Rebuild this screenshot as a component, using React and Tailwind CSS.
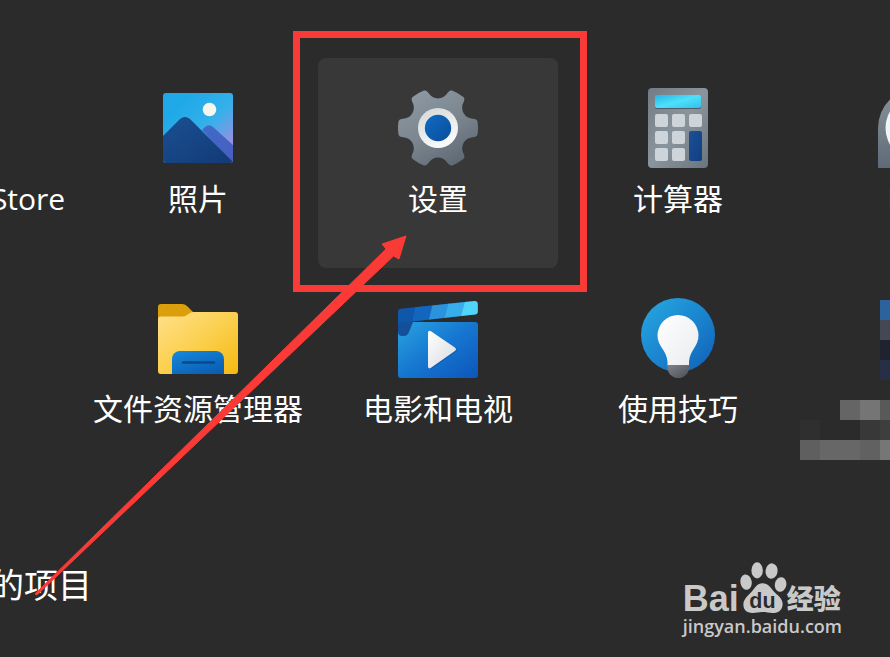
import { useId } from 'react';

function Icon({ children }) {
  return (
    <svg viewBox="0 0 80 80" className="size-20 shrink-0" aria-hidden="true">
      {children}
    </svg>
  );
}

function Gradient({ id, stops, x1 = 0, y1 = 0, x2 = 1, y2 = 1 }) {
  return (
    <linearGradient id={id} x1={x1} y1={y1} x2={x2} y2={y2}>
      {stops.map((color, i) => (
        <stop key={color} offset={i / (stops.length - 1)} stopColor={color} />
      ))}
    </linearGradient>
  );
}

function StoreIcon() {
  return (
    <Icon>
      <path d="M5 20h70v48a6 6 0 0 1-6 6H11a6 6 0 0 1-6-6z" fill="#1a86d8" />
      <path d="M26 20v-6a5 5 0 0 1 5-5h18a5 5 0 0 1 5 5v6" fill="none" stroke="#4cc2f5" strokeWidth="5" />
    </Icon>
  );
}

function PhotosIcon() {
  return (
    <Icon>
      <defs>
        <Gradient id="photo-sky" stops={['#1fa9e8', '#35b0ea', '#a88be0']} x1={0.3} y1={0.1} x2={1} y2={0.8} />
        <Gradient id="photo-front" stops={['#1b4f92', '#123a76']} />
        <Gradient id="photo-back" stops={['#3f6cc8', '#4a5cc0']} />
        <clipPath id="photo-clip">
          <rect x="5" y="5" width="70" height="70" rx="3" />
        </clipPath>
      </defs>
      <g clipPath="url(#photo-clip)">
        <rect x="5" y="5" width="70" height="70" fill="url(#photo-sky)" />
        <path d="M44 42l3-3q4-3.500 8 0l20 18v19z" fill="url(#photo-back)" />
        <path d="M5 48l17-17q5-4 10 0l43 43v2H5z" fill="url(#photo-front)" />
        <circle cx="51.500" cy="21.500" r="6.800" fill="#f7f5ee" />
      </g>
    </Icon>
  );
}

// one tooth and the scallop after it, turned six times round the centre
function gearPath() {
  const point = (x, y, turn) => {
    const a = (turn * Math.PI) / 3;
    const px = 40 + x * Math.cos(a) - y * Math.sin(a);
    const py = 40 + x * Math.sin(a) + y * Math.cos(a);
    return `${px.toFixed(2)} ${py.toFixed(2)}`;
  };
  let d = `M${point(36.5, -9, 0)}`;
  for (let i = 0; i < 6; i += 1) {
    d += `Q${point(39, -8.6, i)} ${point(39.5, -6.5, i)}`;
    d += `Q${point(40.5, 0, i)} ${point(39.5, 6.5, i)}`;
    d += `Q${point(39, 8.6, i)} ${point(36.5, 9, i)}`;
    d += `L${point(35, 9.3, i)}`;
    d += `A11 11 0 0 0 ${point(35, -9.3, i + 1)}`;
    d += `L${point(36.5, -9, i + 1)}`;
  }
  return `${d}Z`;
}

function SettingsIcon() {
  return (
    <Icon>
      <defs>
        <Gradient id="gear" stops={['#8d99a3', '#7b868f', '#5c6772']} x1={0.2} y1={0} x2={0.8} y2={1} />
        <Gradient id="gear-ring" stops={['#d3d5d6', '#fafafa']} x2={0.5} />
        <Gradient id="gear-dot" stops={['#0f6cc2', '#0a4c9c']} />
      </defs>
      <path d={gearPath()} fill="url(#gear)" />
      <circle cx="40" cy="40" r="20" fill="url(#gear-ring)" />
      <circle cx="40" cy="40" r="13.200" fill="url(#gear-dot)" />
    </Icon>
  );
}

const calcKeys = [
  [17, 26], [34, 26], [51, 26],
  [17, 43], [34, 43],
  [17, 60], [34, 60],
];

function CalculatorIcon() {
  return (
    <Icon>
      <defs>
        <Gradient id="calc-body" stops={['#727c84', '#8a949c', '#6a747d']} />
        <Gradient id="calc-screen" stops={['#28b4e6', '#4de0fb', '#35bfe9']} />
        <Gradient id="calc-key" stops={['#1b4f98', '#123f80']} />
      </defs>
      <rect x="10" width="60" height="80" rx="4" fill="url(#calc-body)" />
      <rect x="17" y="8" width="46" height="13" rx="2" fill="#4f5b66" />
      <rect x="17" y="7" width="46" height="13" rx="2" fill="url(#calc-screen)" />
      {calcKeys.map(([x, y]) => (
        <rect key={`${x}-${y}`} x={x} y={y} width="13" height="13" rx="2" fill="#cdd4da" />
      ))}
      <rect x="51" y="43" width="13" height="30" rx="2" fill="url(#calc-key)" />
    </Icon>
  );
}

function ClockIcon() {
  return (
    <Icon>
      <defs>
        <Gradient id="clock-body" stops={['#8a949c', '#5e6b77']} x2={0} />
      </defs>
      <path d="M0 80V40a40 40 0 0 1 80 0v40z" fill="url(#clock-body)" />
      <circle cx="40" cy="40" r="32.500" fill="#eef5f9" />
      <path d="M40 20v21l13 8" fill="none" stroke="#2a3b4c" strokeWidth="4" />
    </Icon>
  );
}

function FolderIcon() {
  return (
    <Icon>
      <defs>
        <Gradient id="folder-front" stops={['#ffe08a', '#fbd04f', '#f5b90f']} />
        <Gradient id="folder-tray" stops={['#1789dc', '#0a5fb4']} x2={0.7} />
      </defs>
      <path d="M0 9a3 3 0 0 1 3-3h21q3 0 5 2l7 7-6 15H0z" fill="#dc9f0c" />
      <path
        d="M0 21q0-2.500 3-2.500h21q3 0 5-1.500l3-2q1.500-1 4-1h41a3 3 0 0 1 3 3v56a3 3 0 0 1-3 3H3a3 3 0 0 1-3-3z"
        fill="url(#folder-front)"
      />
      <path d="M14 76V61a8 8 0 0 1 8-8h36a8 8 0 0 1 8 8v15z" fill="url(#folder-tray)" />
      <path d="M25 64.500h31" stroke="#0a4a8c" strokeWidth="2.500" strokeLinecap="round" />
    </Icon>
  );
}

function MoviesIcon() {
  return (
    <Icon>
      <defs>
        <Gradient id="movie-body" stops={['#2aa4e0', '#1677d0', '#0d55bb']} />
        <Gradient id="movie-play" stops={['#ffffff', '#d6d9dd']} />
        <clipPath id="movie-bar">
          <path d="M0 14q0-3 3-3.300L76.500 3q3-.3 3.300 2.500v8q0 2.700-2.600 3L0 25z" />
        </clipPath>
      </defs>
      <path d="M0 22l16 2h61a3 3 0 0 1 3 3v50a3 3 0 0 1-3 3H3a3 3 0 0 1-3-3z" fill="url(#movie-body)" />
      <path d="M0 14h19l-8 20q-1.500 4-5 4H4q-4 0-4-5z" fill="#144f9a" />
      <g clipPath="url(#movie-bar)">
        <path d="M0 0h80v30H0z" fill="#0f57aa" />
        <path d="M19 0h17l-6 30H13z" fill="#1266bd" />
        <path d="M36 0h17l-8 30H29z" fill="#2a93dc" />
        <path d="M52 0h17l-7 30H44z" fill="#37aeea" />
        <path d="M68 0h14v30H60z" fill="#50d4fa" />
      </g>
      <path d="M31 36q0-3.500 3-1.800l23.500 16q3 2 0 4L34 70.800q-3 1.700-3-1.500z" fill="#0b4596" opacity=".35" />
      <path d="M30 35q0-3.500 3-1.800l23.500 16q3 2 0 4L33 69.800q-3 1.700-3-1.500z" fill="url(#movie-play)" />
    </Icon>
  );
}

function TipsIcon() {
  return (
    <Icon>
      <defs>
        <Gradient id="tips-disc" stops={['#27a9e0', '#1b86d0', '#0f5fb5']} />
        <Gradient id="tips-bulb" stops={['#ffffff', '#e9ebee']} />
        <Gradient id="tips-base" stops={['#7d838a', '#4a4f55']} />
      </defs>
      <circle cx="40" cy="37" r="37" fill="url(#tips-disc)" />
      <path
        d="M40 17a20.500 20.500 0 0 1 20.500 20.500c0 11-8.500 14-9.500 26v4H29.500v-4c-1-12-10-15-10-26A20.500 20.500 0 0 1 40 17z"
        fill="url(#tips-bulb)"
      />
      <path d="M29.500 67H51v2.500a10.700 10.700 0 0 1-21.500 0z" fill="url(#tips-base)" />
    </Icon>
  );
}

// x, y, width, colour of the pixelated blocks
const mosaic = [
  [82, 32, 20, '#2c639c'],
  [82, 52, 20, '#444855'],
  [82, 72, 20, '#1e232f'],
  [82, 92, 20, '#262f45'],
  [42, 132, 20, '#656565'],
  [62, 132, 20, '#757575'],
  [82, 132, 20, '#595959'],
  [2, 152, 20, '#2f2f2f'],
  [62, 152, 20, '#383838'],
  [82, 152, 20, '#3e3e3e'],
  [2, 172, 20, '#5f5f5f'],
  [22, 172, 40, '#676767'],
  [62, 172, 20, '#616161'],
  [82, 172, 20, '#767676'],
];

function MosaicTile() {
  return (
    <svg viewBox="0 0 240 210" className="h-[210px] w-60" aria-hidden="true">
      {mosaic.map(([x, y, width, fill]) => (
        <rect key={`${x}-${y}`} x={x} y={y} width={width} height="20" fill={fill} />
      ))}
    </svg>
  );
}

function AppTile({ icon: TileIcon, label, active }) {
  const id = useId();
  return (
    <div className="relative">
      <button
        type="button"
        aria-labelledby={id}
        className={
          active
            ? 'flex h-[210px] w-full flex-col items-center gap-3 rounded-lg bg-[#383838] pt-[30px]'
            : 'flex h-[210px] w-full flex-col items-center gap-3 rounded-lg pt-[30px]'
        }
      >
        <TileIcon />
        <span id={id} className="text-[30px] leading-[38px] whitespace-nowrap">
          {label}
        </span>
      </button>
      {active && (
        <div className="pointer-events-none absolute -top-[27px] -right-[29px] -bottom-6 -left-[25px] border-7 border-[#f93a37]" />
      )}
    </div>
  );
}

function Arrow() {
  return (
    <svg viewBox="0 0 420 610" className="pointer-events-none absolute top-0 left-0 h-[610px] w-[420px]" aria-hidden="true">
      <path d="M406 236l-24 8 4 5L35 594l2 1 356.500-339 5.500 3z" fill="#f93a37" stroke="#f93a37" strokeWidth="1" strokeLinejoin="round" />
    </svg>
  );
}

function Watermark() {
  return (
    <div className="flex flex-col text-[#c9c9c9]">
      <div className="flex h-[51px] items-end">
        <span className="font-['Liberation_Sans'] text-[36px] leading-7 font-bold">Bai</span>
        <svg viewBox="0 0 143 152" className="h-[51px] w-12" aria-hidden="true">
          <g fill="#c9c9c9">
            <ellipse cx="21" cy="60" rx="17" ry="23" transform="rotate(-10 21 60)" />
            <ellipse cx="54" cy="25" rx="17" ry="24" />
            <ellipse cx="97" cy="27" rx="18" ry="23" transform="rotate(8 97 27)" />
            <ellipse cx="124" cy="67" rx="17" ry="22" transform="rotate(12 124 67)" />
            <path d="M70 63c17 0 23 12 33 24 12 13 28 21 27 40-1 17-13 26-30 25-12-1-18-3-30-3s-18 3-30 3c-17 0-27-9-27-25 0-18 15-27 26-40 10-12 15-24 31-24z" />
          </g>
          <text x="70" y="137" textAnchor="middle" fontSize="64" fontWeight="700" fontFamily="Liberation Sans, sans-serif" fill="#2b2b2b">
            du
          </text>
        </svg>
        <span className="text-[27px] leading-7 font-black">经验</span>
      </div>
      <a href="#jingyan" className="font-['Open_Sans'] text-[18px] leading-[26px] font-semibold">
        jingyan.baidu.com
      </a>
    </div>
  );
}

export default function App() {
  return (
    <main className="relative min-h-screen overflow-hidden bg-[#2b2b2b] pt-[58px] font-['Open_Sans','Noto_Sans_CJK_SC',sans-serif] text-white">
      <div className="-ml-[162px] grid grid-cols-[repeat(5,240px)]">
        <AppTile icon={StoreIcon} label="Microsoft Store" />
        <AppTile icon={PhotosIcon} label="照片" />
        <AppTile icon={SettingsIcon} label="设置" active />
        <AppTile icon={CalculatorIcon} label="计算器" />
        <AppTile icon={ClockIcon} label="时钟" />
        <div />
        <AppTile icon={FolderIcon} label="文件资源管理器" />
        <AppTile icon={MoviesIcon} label="电影和电视" />
        <AppTile icon={TipsIcon} label="使用技巧" />
        <MosaicTile />
      </div>

      <footer className="mt-21 flex items-start justify-between pr-12">
        <h2 className="-ml-[78px] text-[34px] leading-[46px] whitespace-nowrap">推荐的项目</h2>
        <Watermark />
      </footer>

      <Arrow />
    </main>
  );
}
